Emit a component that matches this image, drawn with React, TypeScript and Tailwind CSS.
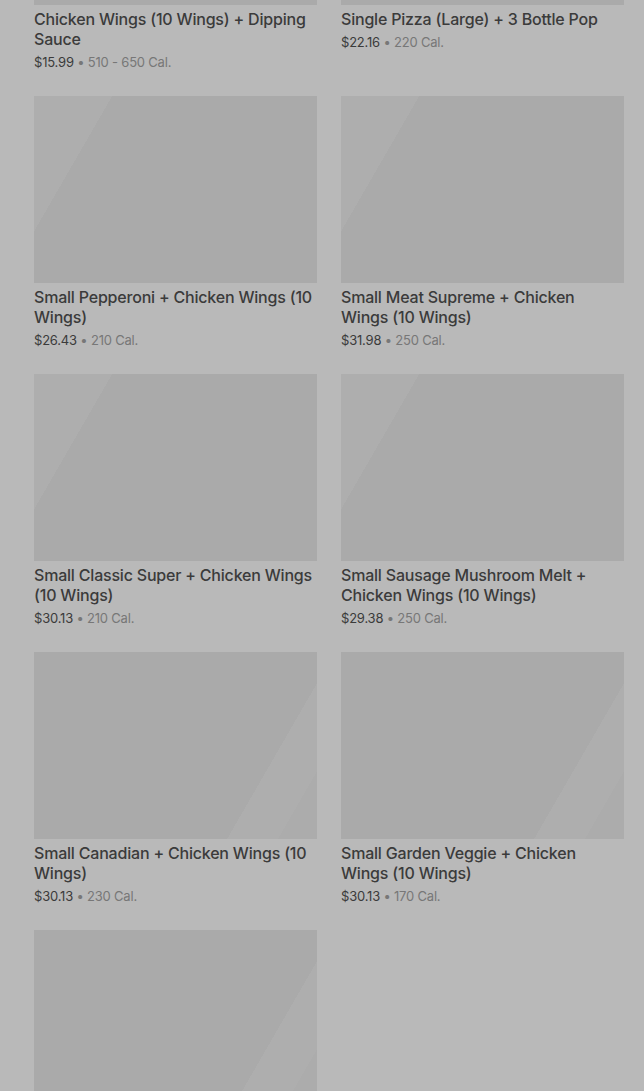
const topShine = "bg-[linear-gradient(120deg,#aeaeae_0%,#aeaeae_20%,#aaaaaa_20%,#aaaaaa_100%)]";
const bottomShine =
  "bg-[linear-gradient(120deg,#aaaaaa_0%,#aaaaaa_77%,#aeaeae_77%,#aeaeae_90%,#acacac_90%,#acacac_100%)]";

const items = [
  { name: "Chicken Wings (10 Wings) + Dipping Sauce", price: "$15.99", cal: "510 - 650 Cal.", shine: "bg-[#aaaaaa]" },
  { name: "Single Pizza (Large) + 3 Bottle Pop", price: "$22.16", cal: "220 Cal.", shine: "bg-[#aaaaaa]" },
  { name: "Small Pepperoni + Chicken Wings (10 Wings)", price: "$26.43", cal: "210 Cal.", shine: topShine },
  { name: "Small Meat Supreme + Chicken Wings (10 Wings)", price: "$31.98", cal: "250 Cal.", shine: topShine },
  { name: "Small Classic Super + Chicken Wings (10 Wings)", price: "$30.13", cal: "210 Cal.", shine: topShine },
  { name: "Small Sausage Mushroom Melt + Chicken Wings (10 Wings)", price: "$29.38", cal: "250 Cal.", shine: topShine },
  { name: "Small Canadian + Chicken Wings (10 Wings)", price: "$30.13", cal: "230 Cal.", shine: bottomShine },
  { name: "Small Garden Veggie + Chicken Wings (10 Wings)", price: "$30.13", cal: "170 Cal.", shine: bottomShine },
  { name: "", price: "", cal: "", shine: bottomShine },
];

function ItemCard({ name, price, cal, shine }: { name: string; price: string; cal: string; shine: string }) {
  return (
    <div className="flex flex-col">
      <div className={`h-[187px] w-full ${shine}`} />
      {name && (
        <>
          <h3 className="mt-[4px] text-[16px] leading-[20px] font-medium tracking-[-0.2px] text-[#3b3b3b]">{name}</h3>
          <p className="mt-[3px] text-[13px] leading-[20px] tracking-[-0.2px] text-[#3b3b3b]">
            {price}
            <span className="text-[#777777]"> • {cal}</span>
          </p>
        </>
      )}
    </div>
  );
}

export default function App() {
  return (
    <div
      className="h-[1091px] w-full overflow-hidden bg-[#b9b9b9]"
      style={{ fontFamily: "Inter, 'Liberation Sans', sans-serif" }}
    >
      <div className="-mt-[182px] grid grid-cols-2 gap-x-[24px] gap-y-[24px] pl-[34px] pr-[20px]">
        {items.map((item, i) => (
          <ItemCard key={i} {...item} />
        ))}
      </div>
    </div>
  );
}
